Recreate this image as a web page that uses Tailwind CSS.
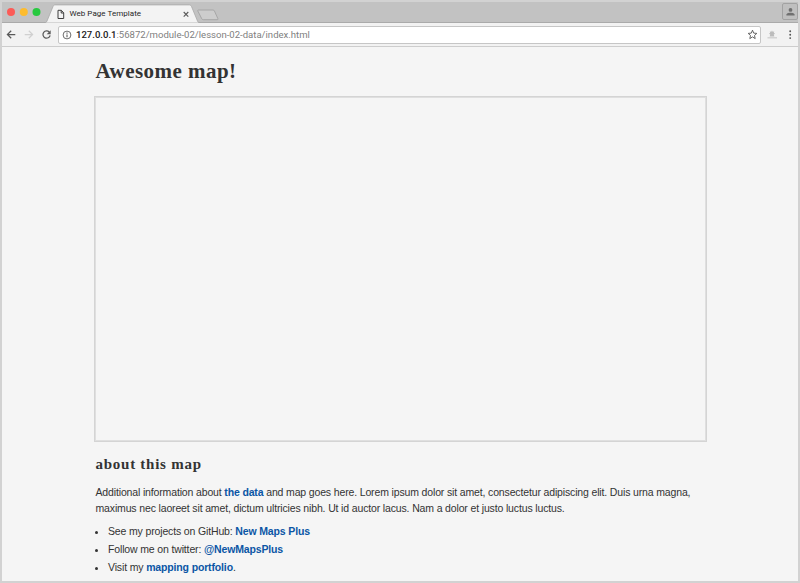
<!DOCTYPE html>
<html lang="en">
<head>
<meta charset="utf-8">
<title>Web Page Template</title>
<script src="https://cdn.jsdelivr.net/npm/@tailwindcss/browser@4"></script>
</head>
<body class="w-[800px] h-[583px] overflow-hidden bg-[#d2d2d2]">
<div class="w-[800px] h-[583px] border-2 border-[#d2d2d2] flex flex-col bg-[#f5f5f5] overflow-hidden">
  <header class="relative h-[21px] shrink-0 bg-[#c2c2c2] border-b border-[#aaaaaa] flex justify-between">
    <svg class="absolute left-0 top-0" width="230" height="21" viewBox="2 2 230 21" fill="none">
      <circle cx="11" cy="12" r="4" fill="#fc5b57"/>
      <circle cx="23.8" cy="12" r="4" fill="#fdbc2e"/>
      <circle cx="36.5" cy="12" r="4" fill="#27c93f"/>
      <path d="M44 23c1.5 0 2.300-.5 3-2l6-14.500c.5-1.200 1.200-1.600 2.500-1.600H189c1.400 0 2 .5 2.500 1.600l6 14.500c.6 1.500 1.500 2 3 2z" fill="#f3f3f3" stroke="#a8a8a8" stroke-width=".8"/>
      <path d="M198.500 10h14.500q1 0 1.400.9l3.500 7.800q.4 1-.7 1h-14q-1 0-1.400-.9l-4-7.800q-.4-1 .7-1z" fill="#cdcdcd" stroke="#a3a3a3" stroke-width=".9"/>
      <path d="M58 10.300h3.300l2.400 2.500v5.700H58zM61.200 10.300v2.700h2.500" stroke="#3f3f3f"/>
      <path d="M183.700 12l4.600 4.600M188.300 12l-4.600 4.600" stroke="#585858" stroke-width="1.100"/>
    </svg>
    <div class="relative ml-[67.500px] pt-[7px] text-[8px] leading-[10px] text-[#262626] font-['Roboto',sans-serif] tracking-[0.040px] whitespace-nowrap">Web Page Template</div>
    <div class="w-[16px] h-[17px] mt-px rounded-[2px] border border-[#a2a2a2] bg-[#bfbfbf] flex items-center justify-center">
      <svg width="9" height="8" viewBox="0 0 9 8" fill="#707070"><circle cx="4.500" cy="1.900" r="1.900"/><path d="M.4 7.400V6.200q1-1.400 4.100-1.400t4.100 1.400v1.200z"/></svg>
    </div>
  </header>
  <nav class="h-[24px] shrink-0 bg-[#f2f2f2] border-b border-[#cdcdcd] flex items-center">
    <svg class="shrink-0" width="55" height="23" viewBox="2 23 55 23" fill="none" stroke-width="1.250">
      <path d="M15.300 34.500H7.500M11.200 30.700l-3.800 3.800 3.800 3.800" stroke="#5a5a5a"/>
      <path d="M24.700 34.500h7.800M28.800 30.700l3.800 3.800-3.800 3.800" stroke="#d0d0d0"/>
      <path d="M49.300 32.200a3.600 3.600 0 1 0 .8 3.100" stroke="#5a5a5a"/>
      <path d="M50.700 30.200v4h-4z" fill="#5a5a5a"/>
    </svg>
    <div class="ml-[1px] w-[703px] h-[18px] shrink-0 rounded-[2px] border border-[#c6c6c6] bg-white flex items-center">
      <svg class="ml-[3px] shrink-0" width="10" height="10" viewBox="0 0 10 10" fill="none" stroke="#5c5c5c"><circle cx="5" cy="5" r="3.900" stroke-width=".9"/><path d="M5 4.500v2.700M5 2.600v1.100" stroke-width="1.100"/></svg>
      <div class="ml-[4px] grow text-[9.550px] leading-[14px] text-[#808080] font-['Roboto',sans-serif] whitespace-nowrap"><span class="text-[#202020] font-medium">127.0.0.1</span>:56872/module-02/lesson-02-data/index.html</div>
      <svg class="mr-[2px] shrink-0" width="11" height="11" viewBox="0 0 11 11" fill="none" stroke="#555" stroke-width=".9"><path d="M5.500 1.200l1.200 2.900 3.100.3-2.300 2.100.7 3.100-2.700-1.700-2.700 1.700.7-3.100-2.300-2.100 3.100-.3z"/></svg>
    </div>
    <svg class="shrink-0" width="35" height="23" viewBox="761 23 35 23">
      <path d="M772 30.500l.7 1.300 1.500-.4-.4 1.500 1.300.7-1.300.8.500 2.100h-4.600l.5-2.100-1.300-.8 1.300-.7-.4-1.500 1.500.4z" fill="#bcbcbc"/><path d="M767.500 37.800h9.500" stroke="#cecece" stroke-width="1.300"/>
      <g fill="#555"><circle cx="790.200" cy="31.300" r=".95"/><circle cx="790.200" cy="34.700" r=".95"/><circle cx="790.200" cy="38.100" r=".95"/></g>
    </svg>
  </nav>
  <main class="grow ml-[92px] w-[614px] pt-[10px] text-[#333] font-['Liberation_Sans',sans-serif] text-[10.500px] tracking-[-0.147px]">
    <h1 class="ml-[1.500px] h-[39px] leading-[28px] text-[21px] font-bold font-['Liberation_Serif',serif] tracking-[0.460px] whitespace-nowrap">Awesome map!</h1>
    <div class="ml-[0.400px] w-[613px] h-[346px] border border-[#d4d4d4] inset-shadow-[0_0_0_1px_#dfdfdf]"></div>
    <h2 class="ml-[1.500px] mt-[12px] leading-[20px] text-[15px] font-bold font-['Liberation_Serif',serif] tracking-[0.740px] whitespace-nowrap">about this map</h2>
    <p class="ml-[1.500px] mt-[11px] leading-[15.500px] whitespace-nowrap">Additional information about <a class="font-bold text-[#0b56a5]">the data</a> and map goes here. Lorem ipsum dolor sit amet, consectetur adipiscing elit. Duis urna magna,<br>maximus nec laoreet sit amet, dictum ultricies nibh. Ut id auctor lacus. Nam a dolor et justo luctus luctus.</p>
    <ul class="ml-[14px] mt-[6px] leading-[18px] list-disc whitespace-nowrap">
      <li>See my projects on GitHub: <a class="font-bold text-[#0b56a5]">New Maps Plus</a></li>
      <li>Follow me on twitter: <a class="font-bold text-[#0b56a5]">@NewMapsPlus</a></li>
      <li>Visit my <a class="font-bold text-[#0b56a5]">mapping portfolio</a>.</li>
    </ul>
  </main>
</div>
</body>
</html>
